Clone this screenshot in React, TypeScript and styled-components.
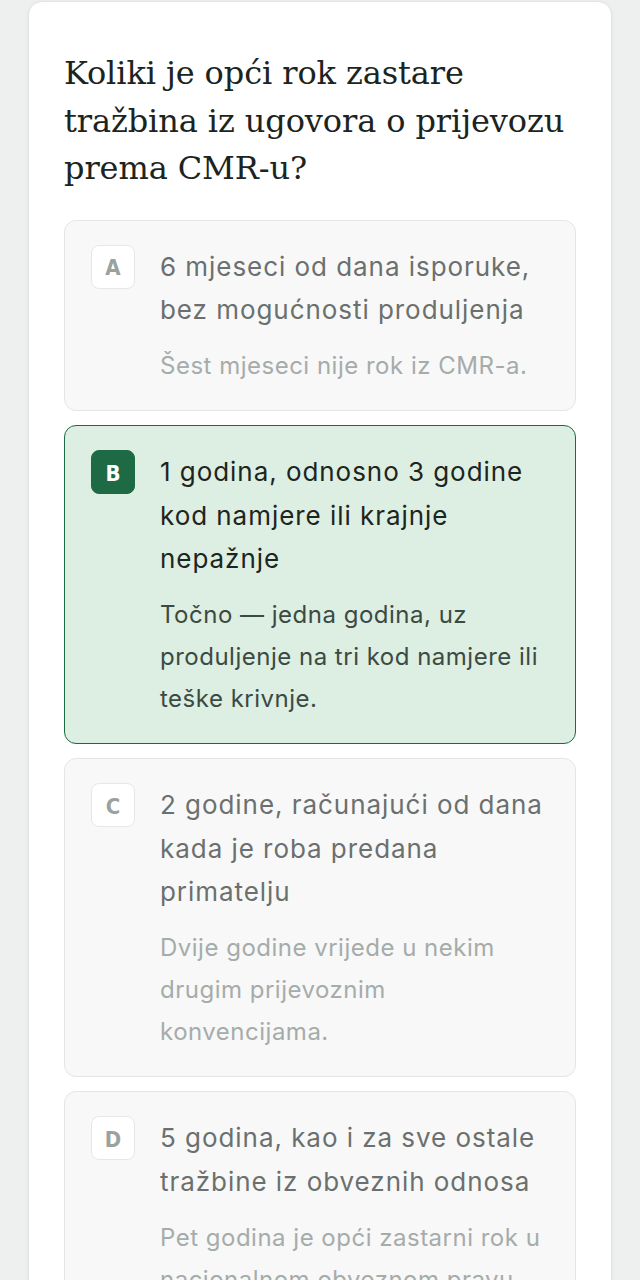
import React from "react";
import styled, { createGlobalStyle } from "styled-components";

const Global = createGlobalStyle`
  html, body { margin: 0; padding: 0; background: #eef0ef; }
  * { box-sizing: border-box; }
`;

const Page = styled.div`
  padding: 1px 28px 0 28px;
  min-height: 1280px;
  background: #eef0ef;
`;

const Card = styled.div`
  background: #ffffff;
  border: 1px solid #e2e4e3;
  border-radius: 14px;
  box-shadow: 0 1px 4px rgba(0, 0, 0, 0.05);
  padding: 48px 35px 40px 35px;
`;

const Question = styled.h1`
  margin: 0 0 27px 0;
  font-family: "DejaVu Serif", "Liberation Serif", serif;
  font-weight: 400;
  font-size: 32px;
  line-height: 47.5px;
  letter-spacing: -0.1px;
  color: #1c2420;
`;

const Options = styled.div`
  display: flex;
  flex-direction: column;
  gap: 14px;
`;

const Option = styled.div<{ $correct?: boolean }>`
  display: flex;
  gap: 25px;
  align-items: flex-start;
  padding: 24px 25px 23px 26px;
  border-radius: 12px;
  border: 1px solid ${(p) => (p.$correct ? "#1c6a44" : "#e4e6e5")};
  background: ${(p) => (p.$correct ? "#ddeee3" : "#f8f8f8")};
`;

const Badge = styled.div<{ $correct?: boolean }>`
  flex: 0 0 44px;
  width: 44px;
  height: 44px;
  border-radius: 8px;
  display: flex;
  align-items: center;
  justify-content: center;
  padding-top: 2px;
  font-family: "DejaVu Sans Condensed", "Roboto", sans-serif;
  font-stretch: condensed;
  font-weight: 700;
  font-size: 22px;
  background: ${(p) => (p.$correct ? "#1d6a45" : "#ffffff")};
  color: ${(p) => (p.$correct ? "#ffffff" : "#9aa29e")};
  border: 1px solid ${(p) => (p.$correct ? "#1d6a45" : "#e6e8e7")};
`;

const Body = styled.div`
  display: flex;
  flex-direction: column;
  gap: 13.5px;
  min-width: 0;
`;

const Answer = styled.div<{ $correct?: boolean }>`
  font-family: "Inter", "Noto Sans", sans-serif;
  font-size: 26px;
  line-height: 43.5px;
  letter-spacing: 0.95px;
  color: ${(p) => (p.$correct ? "#1c2520" : "#6b706e")};
`;

const Explanation = styled.div<{ $correct?: boolean }>`
  font-family: "Inter", "Noto Sans", sans-serif;
  font-size: 24px;
  line-height: 42px;
  letter-spacing: 0.5px;
  color: ${(p) => (p.$correct ? "#3b4a42" : "#a5acaa")};
`;

const items = [
  {
    letter: "A",
    answer: "6 mjeseci od dana isporuke, bez mogućnosti produljenja",
    explanation: "Šest mjeseci nije rok iz CMR-a.",
  },
  {
    letter: "B",
    answer: "1 godina, odnosno 3 godine kod namjere ili krajnje nepažnje",
    explanation:
      "Točno — jedna godina, uz produljenje na tri kod namjere ili teške krivnje.",
    correct: true,
  },
  {
    letter: "C",
    answer: "2 godine, računajući od dana kada je roba predana primatelju",
    explanation: "Dvije godine vrijede u nekim drugim prijevoznim konvencijama.",
  },
  {
    letter: "D",
    answer: "5 godina, kao i za sve ostale tražbine iz obveznih odnosa",
    explanation: "Pet godina je opći zastarni rok u nacionalnom obveznom pravu.",
  },
];

export default function App() {
  return (
    <>
      <Global />
      <Page>
        <Card>
          <Question>Koliki je opći rok zastare tražbina iz ugovora o prijevozu prema CMR-u?</Question>
          <Options>
            {items.map((it) => (
              <Option key={it.letter} $correct={it.correct}>
                <Badge $correct={it.correct}>{it.letter}</Badge>
                <Body>
                  <Answer $correct={it.correct}>{it.answer}</Answer>
                  <Explanation $correct={it.correct}>{it.explanation}</Explanation>
                </Body>
              </Option>
            ))}
          </Options>
        </Card>
      </Page>
    </>
  );
}
